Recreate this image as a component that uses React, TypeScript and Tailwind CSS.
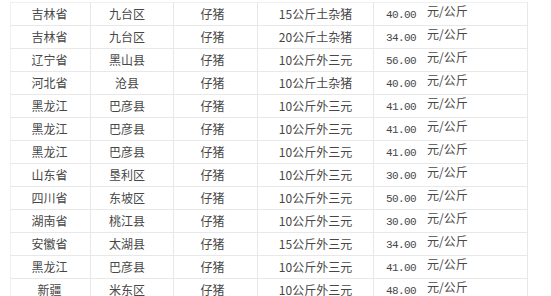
import React from 'react';

type Row = {
  province: string;
  area: string;
  kind: string;
  spec: string;
  price: string;
};

const rows: Row[] = [
  { province: '吉林省', area: '九台区', kind: '仔猪', spec: '15公斤土杂猪', price: '40.00' },
  { province: '吉林省', area: '九台区', kind: '仔猪', spec: '20公斤土杂猪', price: '34.00' },
  { province: '辽宁省', area: '黑山县', kind: '仔猪', spec: '10公斤外三元', price: '56.00' },
  { province: '河北省', area: '沧县', kind: '仔猪', spec: '10公斤土杂猪', price: '40.00' },
  { province: '黑龙江', area: '巴彦县', kind: '仔猪', spec: '10公斤外三元', price: '41.00' },
  { province: '黑龙江', area: '巴彦县', kind: '仔猪', spec: '10公斤外三元', price: '41.00' },
  { province: '黑龙江', area: '巴彦县', kind: '仔猪', spec: '10公斤外三元', price: '41.00' },
  { province: '山东省', area: '垦利区', kind: '仔猪', spec: '10公斤外三元', price: '30.00' },
  { province: '四川省', area: '东坡区', kind: '仔猪', spec: '10公斤外三元', price: '50.00' },
  { province: '湖南省', area: '桃江县', kind: '仔猪', spec: '10公斤外三元', price: '30.00' },
  { province: '安徽省', area: '太湖县', kind: '仔猪', spec: '15公斤外三元', price: '34.00' },
  { province: '黑龙江', area: '巴彦县', kind: '仔猪', spec: '10公斤外三元', price: '41.00' },
  { province: '新疆', area: '米东区', kind: '仔猪', spec: '10公斤外三元', price: '48.00' },
];

const cell = 'h-[23px] border-r border-b border-[#e8e8e8] text-center align-middle p-0';

export default function App() {
  return (
    <div className="w-[551px] h-[296px] overflow-hidden bg-white pt-[2px] pl-[10px] text-[12px] text-[#474747] font-['Noto_Sans_CJK_SC','Noto_Sans',sans-serif]">
      <table className="border-collapse table-fixed w-[518px] border-l border-t border-[#f0f0f0]">
        <colgroup>
          <col className="w-[80px]" />
          <col className="w-[83px]" />
          <col className="w-[84px]" />
          <col className="w-[116px]" />
          <col className="w-[154px]" />
        </colgroup>
        <tbody>
          {rows.map((r, i) => (
            <tr key={i} className="leading-none">
              <td className={`${cell} pr-[2px]`}>{r.province}</td>
              <td className={`${cell} pr-[10px]`}>{r.area}</td>
              <td className={`${cell} pr-[6px]`}>{r.kind}</td>
              <td className={cell}>{r.spec}</td>
              <td className={`${cell} text-left`}>
                <div className="flex items-baseline pl-[12px]">
                  <span className="font-['Liberation_Mono',monospace] text-[11px] tracking-[-0.6px] pt-[3px]">{r.price}</span>
                  <span className="ml-[11px] -translate-y-[2px]">元/公斤</span>
                </div>
              </td>
            </tr>
          ))}
        </tbody>
      </table>
    </div>
  );
}
